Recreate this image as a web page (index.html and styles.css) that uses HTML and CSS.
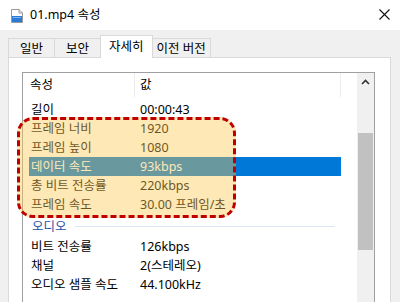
FILE: index.html
```html
<!DOCTYPE html>
<html lang="ko">
<head>
    <meta charset="UTF-8">
    <title>01.mp4 속성</title>
    <link rel="stylesheet" href="styles.css">
</head>
<body>
    <div class="window">
        <div class="titlebar">
            <svg class="file-icon" width="12" height="14" viewBox="0 0 12 14">
                <path d="M0.5 0.5h7.5l3.5 3.5v9.5h-11z" fill="#fff" stroke="#9a9a9a"/>
                <path d="M8 0.5v3.5h3.5" fill="none" stroke="#9a9a9a"/>
                <rect x="1" y="7" width="10" height="6" fill="#2b7bd6"/>
                <rect x="2" y="8" width="8" height="1" fill="#7fb5ee"/>
            </svg>
            <span class="title">01.mp4 속성</span>
            <svg class="close" width="11" height="11" viewBox="0 0 11 11">
                <path d="M0.5 0.5l10 10M10.5 0.5l-10 10" stroke="#111" stroke-width="1.1"/>
            </svg>
        </div>

        <div class="dialog">
            <div class="tabs">
                <div class="tab">일반</div>
                <div class="tab">보안</div>
                <div class="tab active">자세히</div>
                <div class="tab">이전 버전</div>
            </div>

            <div class="panel">
                <div class="listview">
                    <div class="list-main">
                        <div class="list-header">
                            <div class="hcell name">속성</div>
                            <div class="hcell value">값</div>
                        </div>
                        <div class="rows">
                            <div class="row"><span class="name">길이</span><span class="value">00:00:43</span></div>
                            <div class="row"><span class="name">프레임 너비</span><span class="value">1920</span></div>
                            <div class="row"><span class="name">프레임 높이</span><span class="value">1080</span></div>
                            <div class="row selected"><span class="name">데이터 속도</span><span class="value">93kbps</span></div>
                            <div class="row"><span class="name">총 비트 전송률</span><span class="value">220kbps</span></div>
                            <div class="row"><span class="name">프레임 속도</span><span class="value">30.00 프레임/초</span></div>
                            <div class="group"><span>오디오</span><i></i></div>
                            <div class="row"><span class="name">비트 전송률</span><span class="value">126kbps</span></div>
                            <div class="row"><span class="name">채널</span><span class="value">2(스테레오)</span></div>
                            <div class="row"><span class="name">오디오 샘플 속도</span><span class="value">44.100kHz</span></div>
                            <div class="group"><span>미디어</span><i></i></div>
                        </div>
                    </div>
                    <div class="scrollbar">
                        <div class="arrow">
                            <svg width="9" height="6" viewBox="0 0 9 6">
                                <path d="M1 5l3.5-3.5L8 5" fill="none" stroke="#333" stroke-width="1.6"/>
                            </svg>
                        </div>
                        <div class="thumb"></div>
                    </div>
                </div>
            </div>
        </div>

        <!-- highlighted callout drawn over the video rows -->
        <div class="callout"></div>
    </div>
</body>
</html>
```

FILE: styles.css
```css
html, body {
    margin: 0;
    padding: 0;
}
body {
    width: 400px;
    height: 302px;
    overflow: hidden;
    background: #f0f0f0;
    font-family: "Noto Sans", "Noto Sans CJK KR", sans-serif;
    font-size: 12.5px;
    color: #000;
}
.window {
    position: relative;
    height: 302px;
    overflow: hidden;
}
.titlebar {
    height: 30px;
    background: #fff;
    display: flex;
    align-items: center;
    padding-left: 11px;
    padding-right: 10px;
}
.file-icon {
    margin-top: 2px;
}
.title {
    margin-left: 7px;
    font-size: 12.5px;
    line-height: 16px;
}
.close {
    margin-left: auto;
    margin-top: -2px;
}
.dialog {
    padding: 6px 9px 0 8px;
}
.tabs {
    display: flex;
    align-items: flex-end;
    height: 21px;
    padding-left: 1px;
    position: relative;
    z-index: 1;
}
.tab {
    height: 18px;
    line-height: 19px;
    padding: 0 11px;
    border: 1px solid #d9d9d9;
    border-bottom: none;
    margin-left: -1px;
    background: #f0f0f0;
}
.tab:last-child {
    padding: 0 4px;
}
.tab.active {
    height: 22px;
    line-height: 22px;
    background: #fff;
    margin-bottom: -1px;
    padding: 0 8px;
}
.panel {
    background: #fff;
    border: 1px solid #d9d9d9;
    border-bottom: none;
    height: 260px;
    padding: 14px 15px 0 13px;
}
.listview {
    border: 1px solid #a0a0a0;
    border-bottom: none;
    display: flex;
    height: 240px;
}
.list-main {
    flex: 1;
    overflow: hidden;
}
.list-header {
    display: flex;
    height: 24px;
    line-height: 24px;
}
.hcell {
    border-right: 1px solid #ececec;
}
.hcell.name {
    width: 104px;
    padding-left: 7px;
}
.hcell.value {
    width: 200px;
    padding-left: 5px;
}
.rows {
    padding-top: 3px;
    margin-left: 6px;
    width: 312px;
}
.row {
    display: flex;
    height: 19px;
    line-height: 19px;
}
.row .name {
    width: 109px;
    padding-left: 2px;
}
.row.selected {
    background: #0078d7;
    color: #fff;
}
.group {
    display: flex;
    align-items: center;
    height: 23px;
    color: #1e4fa8;
    padding-left: 3px;
}
.group:last-child {
    padding-top: 4px;
}
.group i {
    flex: 1;
    height: 1px;
    background: #dde5f1;
    margin: 1px 6px 0 8px;
}
.scrollbar {
    width: 17px;
    background: #f0f0f0;
    display: flex;
    flex-direction: column;
}
.arrow {
    height: 17px;
    display: flex;
    align-items: center;
    justify-content: center;
}
.thumb {
    margin-top: 43px;
    margin-left: 1px;
    margin-right: 1px;
    height: 117px;
    background: #c1c1c1;
}
.callout {
    position: absolute;
    left: 17px;
    top: 117px;
    width: 213px;
    height: 95px;
    border: 3px dashed #c00000;
    border-radius: 16px;
    background: rgba(250, 200, 80, 0.42);
}
```
